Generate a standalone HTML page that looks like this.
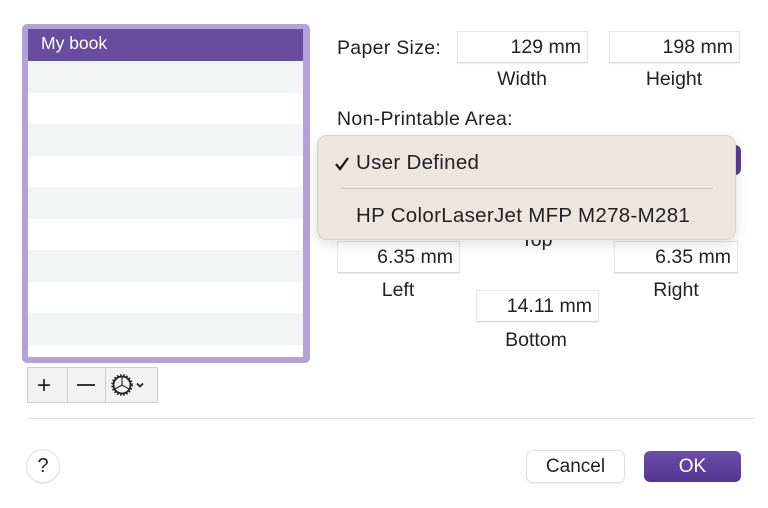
<!DOCTYPE html>
<html><head><style>
*{margin:0;padding:0;box-sizing:border-box}
body{width:768px;height:508px;background:#fff;font-family:"Liberation Sans",sans-serif;color:#222;position:relative;overflow:hidden;font-size:19.5px}
.a{position:absolute}
.fld{position:absolute;background:#fff;border:1px solid #e6e6e6;border-bottom-color:#d8d8d8;box-shadow:0 1px 1px rgba(0,0,0,.08);text-align:right;padding-right:6px;line-height:30px;font-size:19.5px;color:#222}
.lbl{position:absolute;text-align:center;width:140px}
</style></head><body>
<div class="a" style="left:22px;top:24px;width:288px;height:339px;background:#b3a2d6;border-radius:5px"></div>
<div class="a" style="left:28px;top:29px;width:275px;height:328px;background:#fff;overflow:hidden">
 <div style="height:32px;background:#664d9e;color:#fff;font-size:17.5px;padding:4px 0 0 13px">My book</div>
 <div style="height:31.5px;background:#f3f4f4"></div><div style="height:31.5px"></div>
 <div style="height:31.5px;background:#f3f4f4"></div><div style="height:31.5px"></div>
 <div style="height:31.5px;background:#f3f4f4"></div><div style="height:31.5px"></div>
 <div style="height:31.5px;background:#f3f4f4"></div><div style="height:31.5px"></div>
 <div style="height:31.5px;background:#f3f4f4"></div>
</div>
<div class="a" style="left:27px;top:367px;width:131px;height:36px;border:1px solid #cfcfcf;background:#f2f2f2"></div>
<div class="a" style="left:67px;top:368px;width:1px;height:34px;background:#cfcfcf"></div>
<div class="a" style="left:105px;top:368px;width:1px;height:34px;background:#cfcfcf"></div>
<div class="a" style="left:37px;top:372px;font-size:24px">+</div>
<div class="a" style="left:77px;top:384px;width:18px;height:2px;background:#333"></div>
<svg class="a" style="left:108px;top:372px" width="46" height="26" viewBox="0 0 46 26">
<circle cx="14" cy="13" r="8.5" fill="none" stroke="#222" stroke-width="1.8"/>
<circle cx="14" cy="13" r="10" fill="none" stroke="#222" stroke-width="1.6" stroke-dasharray="1.6 1.6"/>
<path d="M14 13 L14 5 M14 13 L7 17 M14 13 L21 17" stroke="#222" stroke-width="1.1"/>
<path d="M29 11.5 l3 3 l3 -3" fill="none" stroke="#222" stroke-width="1.8"/>
</svg>
<div class="a" style="left:27px;top:418px;width:728px;height:1px;background:#e2e2e2"></div>
<div class="a" style="left:27px;top:450px;width:32px;height:32px;border-radius:50%;background:#fff;box-shadow:0 0 0 1px #e0e0e0,0 1px 2px rgba(0,0,0,.2);text-align:center;line-height:32px;font-size:20px">?</div>
<div class="a" style="left:527px;top:451px;width:97px;height:31px;border-radius:6px;background:#fff;box-shadow:0 0 0 1px #e0e0e0,0 1px 2px rgba(0,0,0,.2);text-align:center;line-height:31px;font-size:19px">Cancel</div>
<div class="a" style="left:644px;top:451px;width:97px;height:31px;border-radius:6px;background:linear-gradient(#6a4ea8,#553592);text-align:center;line-height:31px;font-size:19px;color:#fff">OK</div>

<div class="a" style="left:337px;top:37px;letter-spacing:.3px">Paper Size:</div>
<div class="fld" style="left:457px;top:31px;width:131px;height:32px">129 mm</div>
<div class="fld" style="left:609px;top:31px;width:131px;height:32px">198 mm</div>
<div class="lbl" style="left:452px;top:68px">Width</div>
<div class="lbl" style="left:604px;top:68px">Height</div>
<div class="a" style="left:337px;top:108px;letter-spacing:.3px">Non-Printable Area:</div>
<div class="a" style="left:700px;top:145px;width:41px;height:30px;border-radius:6px;background:#5a3a9a"></div>
<div class="a" style="left:521px;top:229px">Top</div>
<div class="fld" style="left:337px;top:241px;width:123px;height:32px">6.35 mm</div>
<div class="fld" style="left:614px;top:241px;width:124px;height:32px">6.35 mm</div>
<div class="lbl" style="left:328px;top:279px">Left</div>
<div class="lbl" style="left:606px;top:279px">Right</div>
<div class="fld" style="left:476px;top:290px;width:123px;height:32px">14.11 mm</div>
<div class="lbl" style="left:466px;top:329px">Bottom</div>

<div class="a" style="left:318px;top:136px;width:417px;height:103px;border-radius:9px;background:#ece6e3;box-shadow:0 0 0 1px #d8d2cf,0 4px 14px rgba(0,0,0,.15)"></div>
<svg class="a" style="left:334px;top:156px" width="16" height="16" viewBox="0 0 16 16"><path d="M2 8 L6 13 L14 2" fill="none" stroke="#111" stroke-width="2.2"/></svg>
<div class="a" style="left:356px;top:151px;font-size:20.5px;letter-spacing:.3px">User Defined</div>
<div class="a" style="left:341px;top:188px;width:372px;height:1px;background:#cfc9c6"></div>
<div class="a" style="left:356px;top:204px;font-size:20.5px;letter-spacing:.3px">HP ColorLaserJet MFP M278-M281</div>
</body></html>
